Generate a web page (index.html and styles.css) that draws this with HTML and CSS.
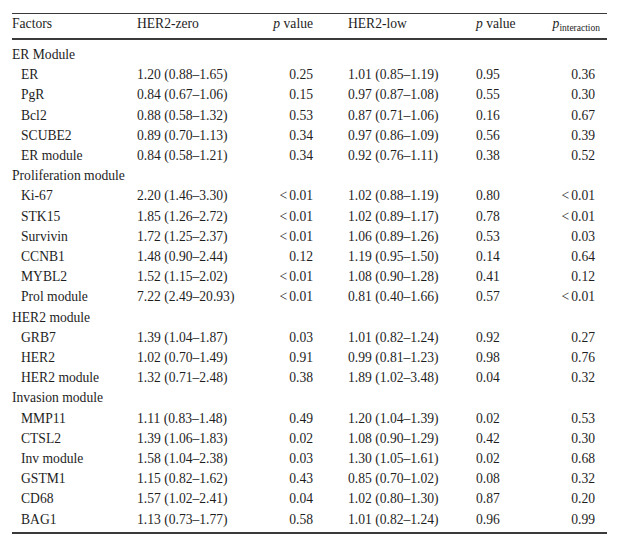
FILE: index.html
```html
<!DOCTYPE html>
<html>
<head>
<meta charset="utf-8">
<link rel="stylesheet" href="styles.css">
</head>
<body>
<div class="wrap">
<table class="tbl">
<colgroup>
<col class="c1"><col class="c2"><col class="c3"><col class="c4"><col class="c5"><col class="c6">
</colgroup>
<thead>
<tr>
<th class="l">Factors</th>
<th class="l">HER2-zero</th>
<th class="r"><i>p</i> value</th>
<th class="l pl">HER2-low</th>
<th class="l"><i>p</i> value</th>
<th class="r ph"><i>p</i><sub>interaction</sub></th>
</tr>
</thead>
<tbody>
<tr class="grp first"><td colspan="6">ER Module</td></tr>
<tr><td class="f">ER</td><td>1.20 (0.88–1.65)</td><td class="r">0.25</td><td class="pl">1.01 (0.85–1.19)</td><td>0.95</td><td class="r pi">0.36</td></tr>
<tr><td class="f">PgR</td><td>0.84 (0.67–1.06)</td><td class="r">0.15</td><td class="pl">0.97 (0.87–1.08)</td><td>0.55</td><td class="r pi">0.30</td></tr>
<tr><td class="f">Bcl2</td><td>0.88 (0.58–1.32)</td><td class="r">0.53</td><td class="pl">0.87 (0.71–1.06)</td><td>0.16</td><td class="r pi">0.67</td></tr>
<tr><td class="f">SCUBE2</td><td>0.89 (0.70–1.13)</td><td class="r">0.34</td><td class="pl">0.97 (0.86–1.09)</td><td>0.56</td><td class="r pi">0.39</td></tr>
<tr><td class="f">ER module</td><td>0.84 (0.58–1.21)</td><td class="r">0.34</td><td class="pl">0.92 (0.76–1.11)</td><td>0.38</td><td class="r pi">0.52</td></tr>
<tr class="grp"><td colspan="6">Proliferation module</td></tr>
<tr><td class="f">Ki-67</td><td>2.20 (1.46–3.30)</td><td class="r"><span class="lt">&lt;</span>0.01</td><td class="pl">1.02 (0.88–1.19)</td><td>0.80</td><td class="r pi"><span class="lt">&lt;</span>0.01</td></tr>
<tr><td class="f">STK15</td><td>1.85 (1.26–2.72)</td><td class="r"><span class="lt">&lt;</span>0.01</td><td class="pl">1.02 (0.89–1.17)</td><td>0.78</td><td class="r pi"><span class="lt">&lt;</span>0.01</td></tr>
<tr><td class="f">Survivin</td><td>1.72 (1.25–2.37)</td><td class="r"><span class="lt">&lt;</span>0.01</td><td class="pl">1.06 (0.89–1.26)</td><td>0.53</td><td class="r pi">0.03</td></tr>
<tr><td class="f">CCNB1</td><td>1.48 (0.90–2.44)</td><td class="r">0.12</td><td class="pl">1.19 (0.95–1.50)</td><td>0.14</td><td class="r pi">0.64</td></tr>
<tr><td class="f">MYBL2</td><td>1.52 (1.15–2.02)</td><td class="r"><span class="lt">&lt;</span>0.01</td><td class="pl">1.08 (0.90–1.28)</td><td>0.41</td><td class="r pi">0.12</td></tr>
<tr><td class="f">Prol module</td><td>7.22 (2.49–20.93)</td><td class="r"><span class="lt">&lt;</span>0.01</td><td class="pl">0.81 (0.40–1.66)</td><td>0.57</td><td class="r pi"><span class="lt">&lt;</span>0.01</td></tr>
<tr class="grp"><td colspan="6">HER2 module</td></tr>
<tr><td class="f">GRB7</td><td>1.39 (1.04–1.87)</td><td class="r">0.03</td><td class="pl">1.01 (0.82–1.24)</td><td>0.92</td><td class="r pi">0.27</td></tr>
<tr><td class="f">HER2</td><td>1.02 (0.70–1.49)</td><td class="r">0.91</td><td class="pl">0.99 (0.81–1.23)</td><td>0.98</td><td class="r pi">0.76</td></tr>
<tr><td class="f">HER2 module</td><td>1.32 (0.71–2.48)</td><td class="r">0.38</td><td class="pl">1.89 (1.02–3.48)</td><td>0.04</td><td class="r pi">0.32</td></tr>
<tr class="grp"><td colspan="6">Invasion module</td></tr>
<tr><td class="f">MMP11</td><td>1.11 (0.83–1.48)</td><td class="r">0.49</td><td class="pl">1.20 (1.04–1.39)</td><td>0.02</td><td class="r pi">0.53</td></tr>
<tr><td class="f">CTSL2</td><td>1.39 (1.06–1.83)</td><td class="r">0.02</td><td class="pl">1.08 (0.90–1.29)</td><td>0.42</td><td class="r pi">0.30</td></tr>
<tr><td class="f">Inv module</td><td>1.58 (1.04–2.38)</td><td class="r">0.03</td><td class="pl">1.30 (1.05–1.61)</td><td>0.02</td><td class="r pi">0.68</td></tr>
<tr><td class="f">GSTM1</td><td>1.15 (0.82–1.62)</td><td class="r">0.43</td><td class="pl">0.85 (0.70–1.02)</td><td>0.08</td><td class="r pi">0.32</td></tr>
<tr><td class="f">CD68</td><td>1.57 (1.02–2.41)</td><td class="r">0.04</td><td class="pl">1.02 (0.80–1.30)</td><td>0.87</td><td class="r pi">0.20</td></tr>
<tr class="last"><td class="f">BAG1</td><td>1.13 (0.73–1.77)</td><td class="r">0.58</td><td class="pl">1.01 (0.82–1.24)</td><td>0.96</td><td class="r pi">0.99</td></tr>
</tbody>
</table>
</div>
</body>
</html>
```

FILE: styles.css
```css
html, body {
  margin: 0;
  padding: 0;
  background: #ffffff;
}
body {
  font-family: "Liberation Serif", "Times New Roman", serif;
  font-size: 13.6px;
  color: #1e1e1e;
}
.wrap {
  margin: 13px 0 0 12px;
  width: 595px;
  border-top: 1px solid #3a3a3a;
  border-bottom: 2px solid #3a3a3a;
}
.tbl {
  width: 595px;
  table-layout: fixed;
  border-collapse: separate;
  border-spacing: 0;
}
.c1 { width: 125px; }
.c2 { width: 130px; }
.c3 { width: 46px; }
.c4 { width: 163px; }
.c5 { width: 64px; }
.c6 { width: 67px; }
th, td {
  padding: 0;
  line-height: 20.2px;
  white-space: nowrap;
  text-align: left;
  font-weight: normal;
}
th {
  line-height: 20px;
  padding-bottom: 4px;
  border-bottom: 2px solid #3a3a3a;
}
.r { text-align: right; }
.pl { padding-left: 35px; }
.pi { padding-right: 12px; }
.ph { padding-right: 7px; }
.f { padding-left: 9px; }
.first td { padding-top: 5px; }
.last td { padding-bottom: 2px; }
sub {
  font-size: 9.5px;
  vertical-align: -3px;
  line-height: 0;
}
.lt { margin-right: 2px; }
```
